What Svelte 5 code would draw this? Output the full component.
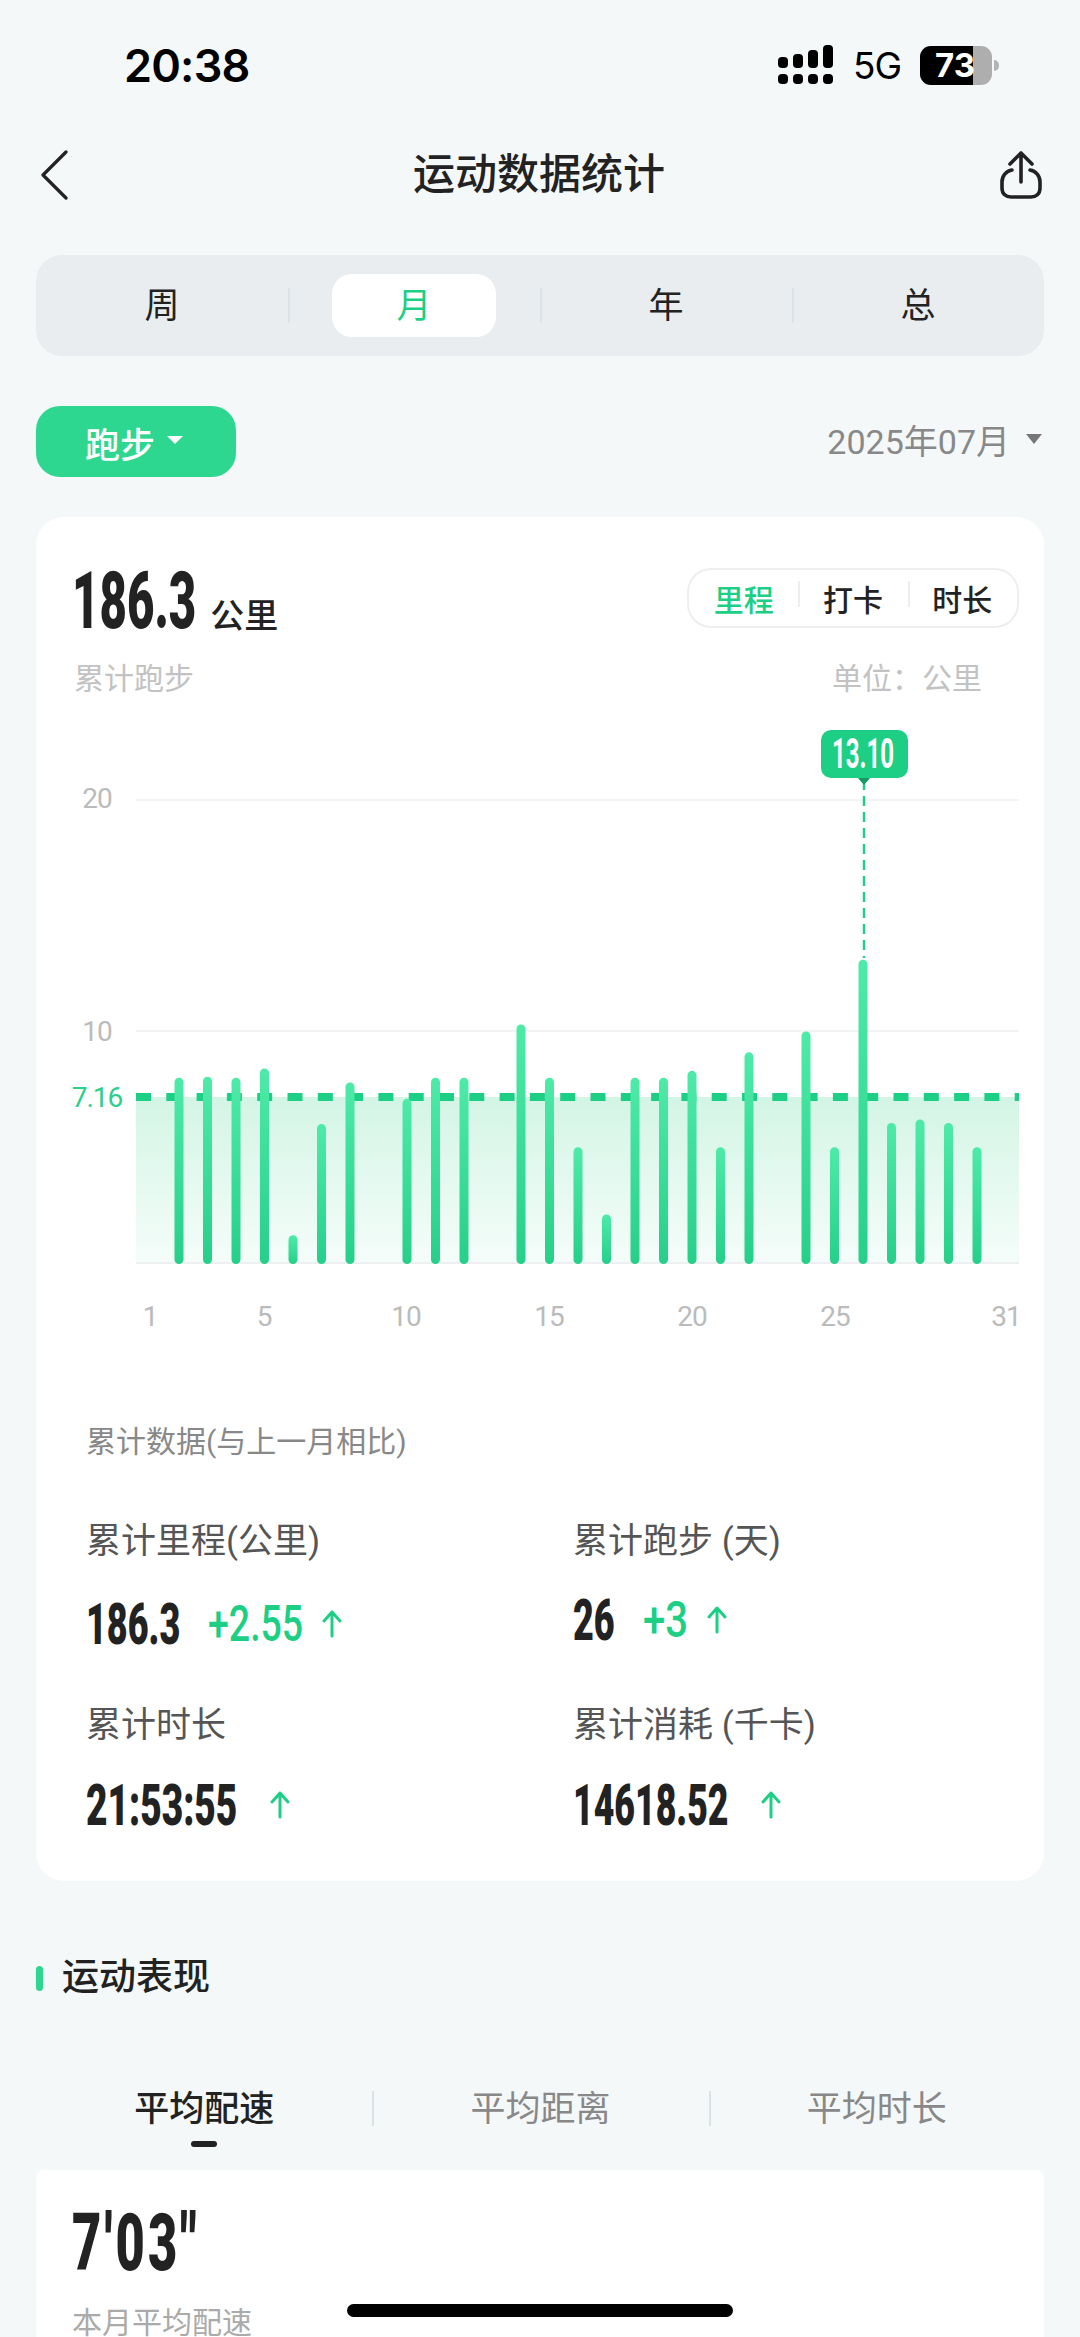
<script>
	const ranges = ['周', '月', '年', '总'];
	const modes = ['里程', '打卡', '时长'];
	const tabs = ['平均配速', '平均距离', '平均时长'];

	// km per day of the month, 0 = no run
	const km = [0, 8, 8.05, 8, 8.4, 1.2, 6, 7.8, 0, 7.1, 8, 8, 0, 10.3, 8, 5, 2.1, 8, 8, 8.3, 5, 9.1, 0, 10, 5, 13.1, 6.05, 6.2, 6.05, 5, 0];
	const baseY = 1263;
	const perKm = 23.15;
	const dayX = (d) => 179 + (d - 2) * 28.5;

	const xLabels = [
		{ t: '1', x: 150 },
		{ t: '5', x: 264 },
		{ t: '10', x: 406 },
		{ t: '15', x: 549 },
		{ t: '20', x: 692 },
		{ t: '25', x: 835 },
		{ t: '31', x: 1006 }
	];

	const stats = [
		{ label: '累计里程(公里)', value: '186.3', fit: 0.62, delta: '+2.55', deltaFit: 0.75 },
		{ label: '累计跑步 (天)', value: '26', fit: 0.62, delta: '+3', deltaFit: 0.8, lift: true },
		{ label: '累计时长', value: '21:53:55', fit: 0.64, low: true },
		{ label: '累计消耗 (千卡)', value: '14618.52', fit: 0.615, low: true }
	];

	// the app's number font is condensed, none installed is, so narrow the real text
	function squeeze(el, s) {
		el.style.transform = `scaleX(${s})`;
		el.style.marginRight = `${-(1 - s) * el.offsetWidth}px`;
	}
</script>

<div class="page">
	<header class="status">
		<span class="time">20:38</span>
		<div class="status-right">
			<svg class="signal" width="56" height="40" viewBox="0 0 56 40" fill="#000">
				<rect x="0" y="12" width="10" height="11" rx="4" />
				<rect x="15" y="9" width="10" height="14" rx="4" />
				<rect x="30" y="5" width="10" height="18" rx="4" />
				<rect x="45" y="0" width="10" height="23" rx="4" />
				<rect x="0" y="29" width="10" height="10" rx="4" />
				<rect x="15" y="29" width="10" height="10" rx="4" />
				<rect x="30" y="29" width="10" height="10" rx="4" />
				<rect x="45" y="29" width="10" height="10" rx="4" />
			</svg>
			<span class="net">5G</span>
			<div class="battery"><span class="level"></span><span class="pct">73</span></div>
			<span class="nub"></span>
		</div>
	</header>

	<nav class="nav">
		<svg class="back" width="30" height="50" viewBox="0 0 30 50" fill="none" stroke="#222" stroke-width="3.2" stroke-linecap="round" stroke-linejoin="round">
			<path d="M26 2 L3 25 L26 48" />
		</svg>
		<h1>运动数据统计</h1>
		<svg class="share" width="44" height="50" viewBox="0 0 44 50" fill="none" stroke="#222" stroke-width="3.6" stroke-linecap="round" stroke-linejoin="round">
			<path d="M22 32 V3 M11 14 L22 3 L33 14" />
			<path d="M13 20 C7 21 3 26 3 32 V38 C3 44 7 47 12 47 H32 C37 47 41 44 41 38 V32 C41 26 37 21 31 20" />
		</svg>
	</nav>

	<div class="ranges">
		{#each ranges as r, i}
			<div class="range" class:sep={i > 0}>
				<span class="range-label" class:active={r === '月'}>{r}</span>
			</div>
		{/each}
	</div>

	<div class="filters">
		<div class="sport">跑步<i class="caret white"></i></div>
		<div class="date">2025年07月<i class="caret grey"></i></div>
	</div>

	<section class="card chart-card">
		<div class="head">
			<div class="total">
				<span class="big" use:squeeze={0.6}>186.3</span>
				<span class="unit">公里</span>
			</div>
			<div class="modes">
				{#each modes as m, i}
					<span class="mode" class:on={i === 0} class:sep={i > 0}>{m}</span>
				{/each}
			</div>
		</div>
		<div class="sub">
			<span>累计跑步</span>
			<span>单位：公里</span>
		</div>

		<svg class="chart" width="1008" height="630" viewBox="36 715 1008 630">
			<defs>
				<linearGradient id="area" x1="0" y1="0" x2="0" y2="1">
					<stop offset="0" stop-color="#d3f5e5" />
					<stop offset="1" stop-color="#f5fdfa" />
				</linearGradient>
				<linearGradient id="bar" x1="0" y1="0" x2="0" y2="1">
					<stop offset="0" stop-color="#4eeaa8" />
					<stop offset="1" stop-color="#26d089" />
				</linearGradient>
			</defs>

			<line x1="136" x2="1019" y1="800" y2="800" stroke="#f2f3f4" stroke-width="2" />
			<line x1="136" x2="1019" y1="1031" y2="1031" stroke="#f2f3f4" stroke-width="2" />
			<rect x="136" y="1097" width="883" height="166" fill="url(#area)" />
			<line x1="136" x2="1019" y1="1263" y2="1263" stroke="#eeeff0" stroke-width="2" />

			<text class="axis" x="97" y="808">20</text>
			<text class="axis" x="97" y="1041">10</text>
			<text class="axis avg" x="97" y="1107">7.16</text>

			<line x1="864" x2="864" y1="780" y2="958" stroke="#1ccf84" stroke-width="2.4" stroke-dasharray="10 6" />

			<line x1="136" x2="1019" y1="1097" y2="1097" stroke="#1ccf84" stroke-width="8" stroke-dasharray="15 15.3" />

			{#each km as v, i}
				{#if v > 0}
					<rect
						x={dayX(i + 1) - 4.5}
						y={baseY - v * perKm}
						width="9"
						height={v * perKm + 1}
						rx="4.5"
						fill="url(#bar)"
					/>
				{/if}
			{/each}

			{#each xLabels as l}
				<text class="axis" x={l.x} y="1326">{l.t}</text>
			{/each}

			<rect x="821" y="730" width="87" height="48" rx="10" fill="#1ccf84" />
			<path d="M858 778 H870 L864 785 Z" fill="#149a63" />
			<text class="tip" x="832" y="768" textLength="62" lengthAdjust="spacingAndGlyphs">13.10</text>
		</svg>

		<div class="summary">
			<div class="summary-title">累计数据(与上一月相比)</div>
			<div class="stats">
				{#each stats as s}
					<div class="stat">
						<div class="stat-label">{s.label}</div>
						<div class="stat-value" class:lift={s.lift} class:low={s.low}>
							<span class="mid" use:squeeze={s.fit}>{s.value}</span>
							{#if s.delta}
								<span class="delta" use:squeeze={s.deltaFit}>{s.delta}</span>
							{/if}
							<svg class="arrow" class:solo={!s.delta} width="22" height="28" viewBox="0 0 22 28" fill="none" stroke="#1ccf84" stroke-width="3" stroke-linecap="round" stroke-linejoin="round">
								<path d="M11 26 V2 M3 11 L11 2 L19 11" />
							</svg>
						</div>
					</div>
				{/each}
			</div>
		</div>
	</section>

	<h2 class="section"><i class="mark"></i>运动表现</h2>

	<div class="tabs">
		{#each tabs as t, i}
			<div class="tab" class:on={i === 0} class:sep={i > 0}>
				<span>{t}</span>
				{#if i === 0}<i class="tab-line"></i>{/if}
			</div>
		{/each}
	</div>

	<section class="card pace-card">
		<div><span class="big pace" use:squeeze={0.64}>7'03"</span></div>
		<div class="pace-label">本月平均配速</div>
	</section>

	<div class="home"></div>
</div>

<style>
	:global(body) {
		background: #f5f8f9;
	}

	.page {
		position: relative;
		width: 1080px;
		height: 2337px;
		overflow: hidden;
		background: #f5f8f9;
		font-family: Roboto, 'Noto Sans CJK SC', sans-serif;
		color: #222;
	}

	.status {
		height: 130px;
		display: flex;
		align-items: center;
		justify-content: space-between;
		padding: 0 81px 0 124px;
		box-sizing: border-box;
		color: #000;
	}

	.time {
		font-family: Inter, sans-serif;
		font-weight: 600;
		font-size: 45px;
		letter-spacing: -0.8px;
	}

	.status-right {
		display: flex;
		align-items: center;
	}

	.signal {
		display: block;
	}

	.net {
		font-family: Inter, sans-serif;
		font-size: 37px;
		margin: 0 19px 0 19px;
		letter-spacing: -1px;
	}

	.battery {
		position: relative;
		width: 72px;
		height: 39px;
		border-radius: 11px;
		background: #aeaeae;
		overflow: hidden;
	}

	.level {
		display: block;
		width: 53px;
		height: 100%;
		background: #000;
	}

	.pct {
		position: absolute;
		left: 15px;
		top: 0;
		line-height: 39px;
		font-family: Inter, sans-serif;
		font-weight: 700;
		font-size: 33px;
		color: #fff;
	}

	.nub {
		width: 5px;
		height: 11px;
		margin-left: 2px;
		background: #b4b4b4;
		border-radius: 0 6px 6px 0;
	}

	.nav {
		height: 90px;
		display: flex;
		align-items: center;
		justify-content: space-between;
		padding: 0 37px 0 40px;
	}

	.nav svg {
		display: block;
	}

	h1 {
		margin: 0 0 0 9px;
		font-size: 42px;
		font-weight: 500;
		line-height: 50px;
	}

	.ranges {
		margin: 35px 36px 0;
		height: 101px;
		border-radius: 26px;
		background: #e9edf0;
		display: grid;
		grid-template-columns: repeat(4, 1fr);
	}

	.range {
		position: relative;
		display: flex;
		align-items: center;
		justify-content: center;
	}

	.sep::before {
		content: '';
		position: absolute;
		left: 0;
		background: #dbe3e8;
		width: 2px;
	}

	.range.sep::before {
		top: 33px;
		height: 35px;
	}

	.range-label {
		width: 164px;
		height: 63px;
		line-height: 66px;
		border-radius: 20px;
		text-align: center;
		font-size: 35px;
	}

	.range-label.active {
		background: #fff;
		color: #1ccf84;
	}

	.filters {
		margin: 50px 38px 0 36px;
		display: flex;
		align-items: center;
		justify-content: space-between;
	}

	.sport {
		width: 200px;
		height: 71px;
		box-sizing: border-box;
		padding: 2px 0 0 49px;
		display: flex;
		align-items: center;
		background: #2dd78f;
		border-radius: 24px;
		color: #fff;
		font-size: 35px;
		font-weight: 500;
	}

	.date {
		display: flex;
		align-items: center;
		color: #888;
		font-size: 34px;
		margin-top: -5px;
	}

	.caret {
		display: block;
		width: 0;
		height: 0;
		border-style: solid;
		border-color: transparent;
		border-width: 10px 8px 0;
	}

	.caret.white {
		margin: -6px 0 0 12px;
		border-width: 8px 8px 0;
		border-top-color: #fff;
	}

	.caret.grey {
		margin-left: 16px;
		border-top-color: #777;
	}

	.card {
		margin: 0 36px;
		background: #fff;
	}

	.chart-card {
		margin-top: 40px;
		border-radius: 28px;
		padding-bottom: 46px;
	}

	.head {
		display: flex;
		justify-content: space-between;
		align-items: flex-start;
		padding: 45px 25px 0 36px;
	}

	.total {
		display: flex;
		align-items: baseline;
	}

	.big {
		display: inline-block;
		transform-origin: left center;
		font-size: 79px;
		line-height: 79px;
		font-weight: 900;
		color: #222;
	}

	.big.pace {
		letter-spacing: 5px;
	}

	.unit {
		margin-left: 14px;
		font-size: 34px;
		font-weight: 500;
	}

	.modes {
		margin-top: 6px;
		width: 332px;
		height: 60px;
		box-sizing: border-box;
		border: 2px solid #eeeeee;
		border-radius: 24px;
		display: flex;
		align-items: center;
	}

	.mode {
		position: relative;
		flex: 1;
		text-align: center;
		font-size: 30px;
		font-weight: 500;
	}

	.mode.sep::before {
		top: 5px;
		height: 26px;
		background: #eeeeee;
	}

	.mode.on {
		color: #1ccf84;
	}

	.sub {
		margin-top: 18px;
		padding: 0 62px 0 38px;
		display: flex;
		justify-content: space-between;
		font-size: 30px;
		line-height: 40px;
		color: #c2c2c2;
	}

	.chart {
		display: block;
		margin-top: 16px;
	}

	.axis {
		font-size: 28px;
		fill: #bbbbbb;
		text-anchor: middle;
		letter-spacing: -1px;
	}

	.axis.avg {
		fill: #2dcf8d;
	}

	.tip {
		font-size: 42px;
		font-weight: 700;
		fill: #fff;
	}

	.summary {
		padding-left: 50px;
	}

	.summary-title {
		margin-top: 77px;
		font-size: 30px;
		line-height: 40px;
		color: #888;
	}

	.stats {
		margin-top: 58px;
		display: grid;
		grid-template-columns: 487px 1fr;
		row-gap: 50px;
	}

	.stat-label {
		font-size: 35px;
		line-height: 44px;
		color: #555;
	}

	.stat-value {
		margin-top: 30px;
		height: 60px;
		display: flex;
		align-items: center;
	}

	.stat-value.lift {
		margin-top: 26px;
		margin-bottom: 4px;
	}

	.stat-value.low {
		margin-top: 27px;
	}

	.mid {
		display: inline-block;
		transform-origin: left center;
		font-size: 58px;
		line-height: 60px;
		font-weight: 900;
	}

	.delta {
		display: inline-block;
		transform-origin: left center;
		margin-left: 28px;
		font-size: 50px;
		line-height: 60px;
		font-weight: 500;
		color: #1ccf84;
	}

	.arrow {
		display: block;
		margin-left: 18px;
	}

	.arrow.solo {
		margin-left: 32px;
	}

	.section {
		margin: 75px 0 0 36px;
		height: 44px;
		display: flex;
		align-items: center;
		font-size: 37px;
		line-height: 44px;
		font-weight: 500;
	}

	.mark {
		display: block;
		width: 7px;
		height: 25px;
		margin-right: 19px;
		border-radius: 4px;
		background: #2dd78f;
	}

	.tabs {
		margin: 85px 35px 0 36px;
		display: grid;
		grid-template-columns: repeat(3, 1fr);
	}

	.tab {
		position: relative;
		height: 85px;
		display: flex;
		flex-direction: column;
		align-items: center;
		font-size: 35px;
		line-height: 50px;
		color: #888;
	}

	.tab.sep::before {
		top: 6px;
		height: 35px;
	}

	.tab.on {
		color: #222;
		font-weight: 500;
	}

	.tab-line {
		display: block;
		width: 26px;
		height: 6px;
		margin-top: 6px;
		border-radius: 3px;
		background: #222;
	}

	.pace-card {
		border-radius: 8px 8px 0 0;
		padding: 34px 36px 40px;
	}

	.pace-label {
		margin-top: 20px;
		font-size: 30px;
		line-height: 40px;
		color: #aaa;
	}

	.home {
		position: absolute;
		left: 347px;
		top: 2304px;
		width: 386px;
		height: 13px;
		border-radius: 7px;
		background: #000;
	}
</style>
